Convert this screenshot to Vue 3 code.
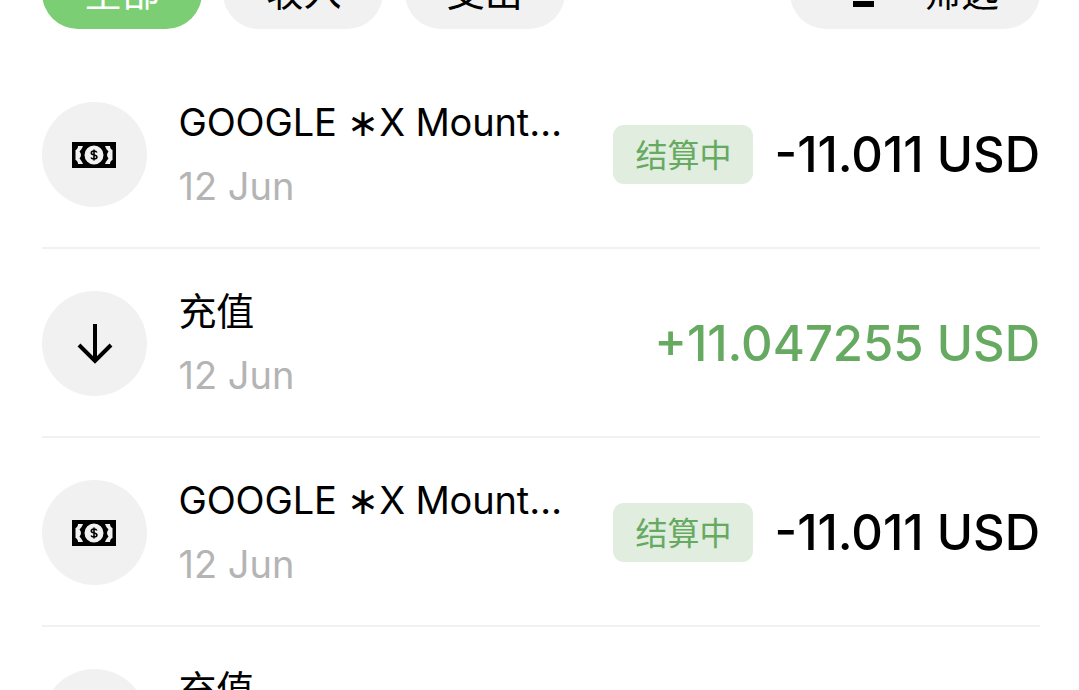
<script setup>
const filters = [
  { id: 'all', label: '全部', active: true },
  { id: 'in', label: '收入' },
  { id: 'out', label: '支出' }
]

const rows = [
  { id: 1, type: 'spend', title: 'GOOGLE ∗X Mountain View', date: '12 Jun', amount: '-11.011 USD', pending: true },
  { id: 2, type: 'topup', title: '充值', date: '12 Jun', amount: '+11.047255 USD' },
  { id: 3, type: 'spend', title: 'GOOGLE ∗X Mountain View', date: '12 Jun', amount: '-11.011 USD', pending: true },
  { id: 4, type: 'topup', title: '充值', date: '12 Jun', amount: '+11.047255 USD' }
]
</script>

<template>
  <div class="page">
    <div class="filters">
      <button v-for="f in filters" :key="f.id" class="chip" :class="{ active: f.active }">{{ f.label }}</button>
      <button class="chip sift">
        <svg class="sift-icon" width="21" height="44" viewBox="0 0 21 44">
          <rect x="0" y="34" width="21" height="6" fill="#000" />
        </svg>
        <span>筛选</span>
      </button>
    </div>

    <ul class="list">
      <li v-for="r in rows" :key="r.id" class="row">
        <div class="icon">
          <svg v-if="r.type === 'spend'" class="note" width="44" height="26" viewBox="0 0 44 26">
            <path fill="#000" fill-rule="evenodd" d="M0 0H44V26H0ZM6 4H11C10 6.500 9 8 7.500 9.500C9.500 11.500 9.500 14.500 7.500 16.500C9 18 10 19.500 11 22H6C6 20 5 18.500 3.500 18V8C5 7.500 6 6 6 4ZM38 4H33C34 6.500 35 8 36.500 9.500C34.500 11.500 34.500 14.500 36.500 16.500C35 18 34 19.500 33 22H38C38 20 39 18.500 40.500 18V8C39 7.500 38 6 38 4ZM22 3.500A9.500 9.500 0 1 0 22 22.500A9.500 9.500 0 1 0 22 3.500Z" />
            <path fill="none" stroke="#000" stroke-width="1.600" d="M24.800 10.600C24.400 9.500 23.300 9 22 9C20.500 9 19.300 9.800 19.300 11C19.300 13.800 24.900 12.300 24.900 15C24.900 16.300 23.600 17 22 17C20.600 17 19.500 16.500 19.100 15.400M22 7.500V18.500" />
          </svg>
          <svg v-else width="36" height="40" viewBox="0 0 36 40">
            <path fill="none" stroke="#000" stroke-width="4" d="M18 0V37M2 21L18 37L34 21" />
          </svg>
        </div>
        <div class="info">
          <div class="title">{{ r.title }}</div>
          <div class="date">{{ r.date }}</div>
        </div>
        <span v-if="r.pending" class="tag">结算中</span>
        <div class="amount" :class="{ plus: r.type === 'topup' }">{{ r.amount }}</div>
      </li>
    </ul>
  </div>
</template>

<style>
html, body {
  margin: 0;
  background: #fff;
}
</style>

<style scoped>
.page {
  width: 1079px;
  height: 690px;
  overflow: hidden;
  font-family: Inter, "Noto Sans CJK SC", sans-serif;
  color: #000;
}

.filters {
  display: flex;
  gap: 21.400px;
  margin: -51px 39px 0 42px;
}

.chip {
  width: 160px;
  height: 80px;
  border: 0;
  border-radius: 36px;
  background: #f1f1f1;
  color: #000;
  font: inherit;
  font-size: 38px;
  padding: 0;
}

.chip.active {
  background: #7bce73;
  color: #fff;
}

.sift {
  width: 250px;
  margin-left: auto;
  padding-left: 63px;
  display: flex;
  align-items: center;
  gap: 49px;
}

.list {
  list-style: none;
  margin: 31px 39px 0 42px;
  padding: 0;
}

.row {
  display: flex;
  align-items: center;
  height: 185px;
  padding-top: 2px;
  border-bottom: 2px solid #f1f1f1;
}

.icon {
  width: 105px;
  height: 105px;
  flex: none;
  border-radius: 50%;
  background: #f1f1f1;
  display: flex;
  align-items: center;
  justify-content: center;
}

.note {
  margin-right: 2px;
}

.info {
  flex: 1;
  min-width: 0;
  margin: 0 0 1px 31.500px;
}

.title {
  width: 386px;
  font-size: 38px;
  letter-spacing: -0.150px;
  line-height: 44px;
  white-space: nowrap;
  overflow: hidden;
  text-overflow: ellipsis;
}

.date {
  margin-top: 20px;
  font-size: 38px;
  line-height: 44px;
  color: #b4b4b4;
}

.tag {
  flex: none;
  width: 140px;
  height: 59px;
  margin-right: 21px;
  border-radius: 11px;
  background: #e0eddf;
  color: #66a961;
  font-size: 32px;
  line-height: 61px;
  text-align: center;
}

.amount {
  flex: none;
  font-size: 49px;
  font-weight: 500;
  white-space: nowrap;
}

.amount.plus {
  color: #66a961;
}
</style>
